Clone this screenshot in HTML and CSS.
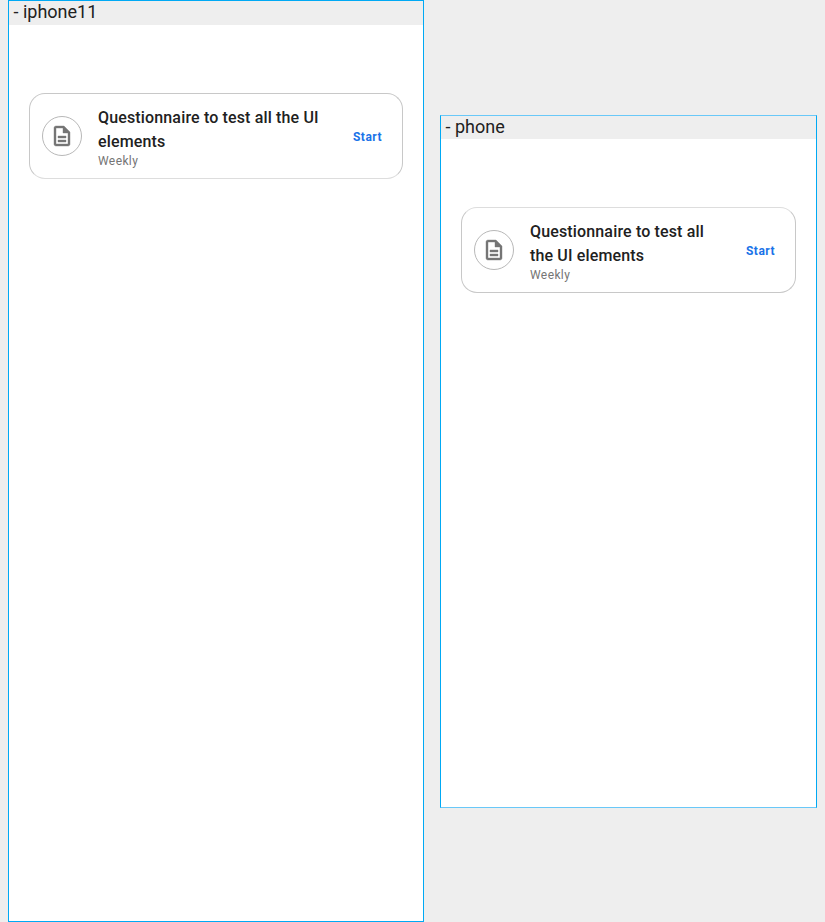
FILE: index.html
```
<!DOCTYPE html>
<html lang="en">
<head>
<meta charset="utf-8">
<title>Devices</title>
<link rel="stylesheet" href="styles.css">
</head>
<body>
<main class="board">
  <section class="device device-large">
    <header class="device-name">- iphone11</header>
    <article class="card">
      <div class="icon"><svg viewBox="0 0 24 24"><path d="M8 16h8v2H8zm0-4h8v2H8zm6-10H6c-1.100 0-2 .9-2 2v16c0 1.100.89 2 1.990 2H18c1.100 0 2-.9 2-2V8l-6-6zm4 18H6V4h7v5h5v11z"/></svg></div>
      <div class="info"><h2>Questionnaire to test all the UI elements</h2><p>Weekly</p></div>
      <a class="start">Start</a>
    </article>
  </section>
  <section class="device device-small">
    <header class="device-name">- phone</header>
    <article class="card">
      <div class="icon"><svg viewBox="0 0 24 24"><path d="M8 16h8v2H8zm0-4h8v2H8zm6-10H6c-1.100 0-2 .9-2 2v16c0 1.100.89 2 1.990 2H18c1.100 0 2-.9 2-2V8l-6-6zm4 18H6V4h7v5h5v11z"/></svg></div>
      <div class="info"><h2>Questionnaire to test all the UI elements</h2><p>Weekly</p></div>
      <a class="start">Start</a>
    </article>
  </section>
</main>
</body>
</html>
```
FILE: styles.css
```
* { box-sizing: border-box; }
body { margin: 0; background: #eee; font-family: Roboto, sans-serif; color: #212121; }
.board { display: flex; align-items: flex-start; gap: 16px; height: 922px; padding-left: 8px; }
.device { background: #fff; border: 1px solid #00a9f4; flex: none; }
.device-large { width: 416px; height: 922px; }
.device-small { width: 377px; height: 693px; margin-top: 115px; border-top-color: #69c8f8; border-bottom-color: #69c8f8; }
.device-name { height: 24px; padding-left: 4.500px; background: #eee; font-size: 18px; line-height: 22px; }
.device-small .device-name { height: 23px; }
.card { display: flex; align-items: flex-start; height: 86px; margin: 68px 20px 0; padding: 0 20px 0 12px; border: 1px solid #c8c8c8; border-radius: 16px; }
.device-large .card { border-bottom-color: #ddd; }
.device-small .card { border-top-color: #ddd; }
.icon { display: flex; align-items: center; justify-content: center; flex: none; width: 40px; height: 40px; margin: 22px .5px 0 -.5px; border: 1px solid #b8b8b8; border-radius: 50%; }
.icon svg { width: 24px; height: 24px; fill: #757575; stroke: #757575; stroke-width: .4; }
.info { flex: 1; margin: 12px 16px 0; }
.device-small .info { margin-top: 12px; }
h2 { margin: 0; font-size: 16px; line-height: 24px; font-weight: 500; letter-spacing: .15px; }
p { margin: 0; font-size: 12px; line-height: 14px; letter-spacing: .4px; color: #757575; }
.start { margin-top: 36px; font-size: 12px; line-height: 14px; font-weight: 700; letter-spacing: .47px; color: #1a73e8; }
```
